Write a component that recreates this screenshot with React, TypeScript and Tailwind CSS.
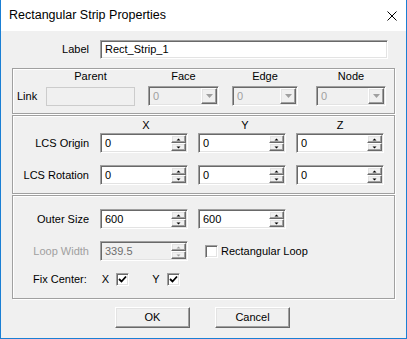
import React from "react";

const sunken =
  "border border-t-[#a0a0a0] border-l-[#a0a0a0] border-b-white border-r-white shadow-[inset_1px_1px_0_#696969,inset_-1px_-1px_0_#e3e3e3]";
const raised =
  "border border-t-white border-l-white border-b-[#696969] border-r-[#696969] shadow-[inset_-1px_-1px_0_#a0a0a0,inset_1px_1px_0_#e3e3e3]";
const etched = "border border-[#a0a0a0] shadow-[inset_1px_1px_0_#ffffff,1px_1px_0_#ffffff]";

const Arrow = ({ up, color, big }: { up?: boolean; color: string; big?: boolean }) =>
  big ? (
    <svg width="7" height="4" viewBox="0 0 7 4">
      <path d="M0 0h7L3.5 4z" fill={color} />
    </svg>
  ) : (
    <svg width="5" height="3" viewBox="0 0 5 3">
      <path d={up ? "M2.5 0.5L4.5 2.5H0.5z" : "M0.5 0.5h4L2.5 2.5z"} fill={color} />
    </svg>
  );

const SpinBtn = ({ up, disabled }: { up?: boolean; disabled?: boolean }) => (
  <div className={`flex h-[8px] w-[15px] items-center justify-center bg-[#f0f0f0] ${raised}`}>
    <Arrow up={up} color={disabled ? "#a0a0a0" : "#000000"} />
  </div>
);

const Spin = ({ value, disabled }: { value: string; disabled?: boolean }) => (
  <div
    className={`flex h-[20px] w-[88px] items-center ${sunken} ${
      disabled ? "bg-[#f0f0f0] text-[#6d6d6d]" : "bg-white text-black"
    }`}
  >
    <span className="flex-1 pl-[4px] leading-[13px]">{value}</span>
    <div className="flex flex-col pr-[1px]">
      <SpinBtn up disabled={disabled} />
      <SpinBtn disabled={disabled} />
    </div>
  </div>
);

const Combo = ({ w }: { w: string }) => (
  <div className={`flex h-[20px] ${w} items-center bg-[#f0f0f0] ${sunken}`}>
    <span className="flex-1 pl-[4px] leading-[13px] text-[#a0a0a0]">0</span>
    <div className={`mr-[1px] flex h-[16px] w-[16px] items-center justify-center bg-[#f0f0f0] ${raised}`}>
      <Arrow big color="#a0a0a0" />
    </div>
  </div>
);

const Check = ({ checked }: { checked?: boolean }) => (
  <div className={`flex h-[13px] w-[13px] items-center justify-center bg-white ${sunken}`}>
    {checked && (
      <svg width="9" height="9" viewBox="0 0 9 9">
        <path d="M1 4l2.5 2.5L8 1.5" stroke="#000" strokeWidth="1.8" fill="none" />
      </svg>
    )}
  </div>
);

const Button = ({ label }: { label: string }) => (
  <div className={`flex h-[21px] w-[75px] items-center justify-center bg-[#f0f0f0] ${raised}`}>
    {label}
  </div>
);

export default function App() {
  return (
    <div className="flex h-[339px] w-[407px] flex-col border-x border-b border-[#1a7fd4] bg-[#f0f0f0] font-['Liberation_Sans',Arial,sans-serif] text-[11px] text-black">
      {/* title bar */}
      <div className="flex h-[31px] items-center justify-between bg-white pl-[8px] pr-[9px]">
        <span className="text-[12.5px]">Rectangular Strip Properties</span>
        <svg width="10" height="10" viewBox="0 0 10 10">
          <path d="M0.5 0.5l9 9M9.5 0.5l-9 9" stroke="#000" strokeWidth="1" />
        </svg>
      </div>

      <div className="flex flex-1 flex-col px-[11px] pt-[9px]">
        {/* label */}
        <div className="flex items-center">
          <span className="w-[77px] text-right">Label</span>
          <div className={`ml-[11px] flex h-[19px] w-[288px] items-center bg-white pl-[4px] ${sunken}`}>
            Rect_Strip_1
          </div>
        </div>

        {/* link group */}
        <div className={`mt-[9px] flex flex-col px-[4px] pt-[1px] pb-[7px] ${etched}`}>
          <div className="flex leading-[13px]">
            <span className="ml-[29px] w-[89px] text-center">Parent</span>
            <span className="ml-[13px] w-[71px] text-center">Face</span>
            <span className="ml-[13px] w-[66px] text-center">Edge</span>
            <span className="ml-[18px] w-[70px] text-center">Node</span>
          </div>
          <div className="mt-[3px] flex items-center">
            <span className="w-[29px]">Link</span>
            <div className="h-[19px] w-[89px] border border-[#cccccc] bg-[#f0f0f0]" />
            <div className="ml-[13px]">
              <Combo w="w-[71px]" />
            </div>
            <div className="ml-[13px]">
              <Combo w="w-[66px]" />
            </div>
            <div className="ml-[18px]">
              <Combo w="w-[70px]" />
            </div>
          </div>
        </div>

        {/* LCS group */}
        <div className={`mt-[1px] flex flex-col pt-[3px] pb-[8px] ${etched}`}>
          <div className="flex pl-[87px] leading-[13px]">
            <span className="w-[88px] pl-[4px] text-center">X</span>
            <span className="ml-[10px] w-[88px] pl-[6px] text-center">Y</span>
            <span className="ml-[10px] w-[88px] text-center">Z</span>
          </div>
          <div className="mt-[1px] flex items-center">
            <span className="w-[76px] text-right">LCS Origin</span>
            <div className="ml-[11px] flex gap-[10px]">
              <Spin value="0" />
              <Spin value="0" />
              <Spin value="0" />
            </div>
          </div>
          <div className="mt-[12px] flex items-center">
            <span className="w-[76px] text-right">LCS Rotation</span>
            <div className="ml-[11px] flex gap-[10px]">
              <Spin value="0" />
              <Spin value="0" />
              <Spin value="0" />
            </div>
          </div>
        </div>

        {/* size group */}
        <div className={`mt-[1px] flex flex-col pt-[13px] pb-[12px] ${etched}`}>
          <div className="flex items-center">
            <span className="w-[76px] text-right">Outer Size</span>
            <div className="ml-[11px] flex gap-[10px]">
              <Spin value="600" />
              <Spin value="600" />
            </div>
          </div>
          <div className="mt-[12px] flex items-center">
            <span className="w-[76px] text-right text-[#a0a0a0]">Loop Width</span>
            <div className="ml-[11px]">
              <Spin value="339.5" disabled />
            </div>
            <div className="ml-[17px] flex items-center gap-[3px]">
              <Check />
              <span>Rectangular Loop</span>
            </div>
          </div>
          <div className="mt-[12px] flex h-[13px] items-center pl-[20px]">
            <span>Fix Center:</span>
            <span className="ml-[15px]">X</span>
            <div className="ml-[7px]">
              <Check checked />
            </div>
            <span className="ml-[23px]">Y</span>
            <div className="ml-[8px]">
              <Check checked />
            </div>
          </div>
        </div>

        {/* buttons */}
        <div className="mt-[8px] flex gap-[25px] pl-[103px]">
          <Button label="OK" />
          <Button label="Cancel" />
        </div>
      </div>
    </div>
  );
}
